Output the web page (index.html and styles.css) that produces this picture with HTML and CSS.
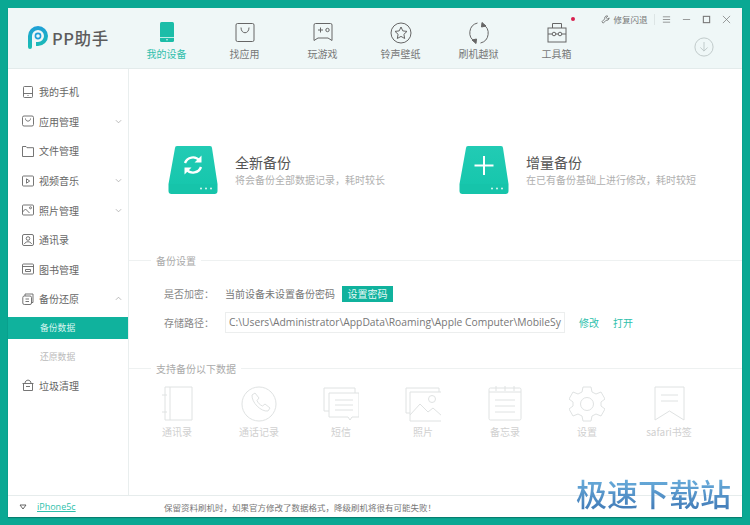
FILE: index.html
```html
<!DOCTYPE html>
<html lang="zh-CN">
<head>
<meta charset="utf-8">
<title>PP助手</title>
<link rel="stylesheet" href="styles.css">
</head>
<body>
<div class="window">
  <header class="header">
    <div class="brand">
      <svg class="logo" viewBox="0 0 22 24"><defs><linearGradient id="lg" x1="0" y1="0" x2="0" y2="1"><stop offset="0" stop-color="#1f9fd8"/><stop offset="1" stop-color="#19c0b0"/></linearGradient></defs><path d="M1 10a10 10 0 1 1 10 10h-2v-4h2a6 6 0 1 0-6-6v11a2 2 0 0 1-4 0z" fill="url(#lg)"/><circle cx="11" cy="10" r="2.6" fill="none" stroke="#1f9fd8" stroke-width="1.6"/></svg>
      <span class="brand-name">PP助手</span>
    </div>
    <nav class="nav">
      <a class="nav-item active"><svg class="nav-icon" viewBox="0 0 22 22"><rect x="4" y="0" width="14" height="20" rx="1.5" fill="#1bbda8"/><path d="M4 15.5h14" stroke="#e8f7f5" stroke-width=".8"/><circle cx="11" cy="17.7" r=".8" fill="#e8f7f5"/></svg>我的设备</a>
      <a class="nav-item"><svg class="nav-icon" viewBox="0 0 22 22"><rect x="2" y="1.5" width="18" height="18" rx="1.5"/><path d="M7 5.500c0 7 8 7 8 0" stroke="#666"/></svg>找应用</a>
      <a class="nav-item"><svg class="nav-icon" viewBox="0 0 22 22"><path d="M2 3a1.500 1.500 0 0 1 1.500-1.500h15A1.500 1.500 0 0 1 20 3v15.500l-4-2.500H6l-4 2.500z"/><path d="M6 8h5M8.500 5.500v5"/><circle cx="15.500" cy="8" r="1.700"/></svg>玩游戏</a>
      <a class="nav-item"><svg class="nav-icon" viewBox="0 0 22 22"><circle cx="11" cy="11" r="10"/><path d="M11 5l1.800 3.900 4.200.5-3.100 2.900.8 4.200L11 14.400l-3.700 2.100.8-4.200L5 9.400l4.200-.5z"/></svg>铃声壁纸</a>
      <a class="nav-item"><svg class="nav-icon" viewBox="0 0 22 22"><path d="M7 19.500A10 10 0 0 1 9.500 1M15 2.500A10 10 0 0 1 12.500 21"/><path d="M14 .5l4 3.500-4.500 1z" fill="#666"/><path d="M8 21.500L4 18l4.500-1z" fill="#666"/></svg>刷机越狱</a>
      <a class="nav-item"><svg class="nav-icon" viewBox="0 0 22 22"><path d="M6.500 6V1.500h9V6"/><rect x="2" y="6" width="18" height="14"/><path d="M2 12h4M16 12h4M10 12h2"/><circle cx="8" cy="12" r="1.800"/><circle cx="14" cy="12" r="1.800"/></svg>工具箱<span class="dot"></span></a>
    </nav>
    <div class="header-right">
      <div class="toolbar">
        <svg class="tool-wrench" viewBox="0 0 10 10"><path d="M6.500 1a2.500 2.500 0 0 0-2.300 3.300L1 7.500 2.500 9l3.200-3.200A2.500 2.500 0 0 0 9 3.200L7.500 4.500 5.800 3 7.500 1.200z"/></svg>
        <span class="repair">修复闪退</span>
        <span class="tool-sep"></span>
        <svg class="win-btn" viewBox="0 0 10 10"><path d="M1 2h8M1 5h8M1 8h8"/></svg>
        <svg class="win-btn" viewBox="0 0 10 10"><path d="M1 5h8"/></svg>
        <svg class="win-btn" viewBox="0 0 10 10"><rect x="1.500" y="1.500" width="7" height="7" stroke-width="1.200"/></svg>
        <svg class="win-btn" viewBox="0 0 10 10"><path d="M1 1l8 8M9 1l-8 8"/></svg>
      </div>
      <svg class="download" viewBox="0 0 22 22"><circle cx="11" cy="11" r="10"/><path d="M11 5.500v10M7 11.500l4 4 4-4"/></svg>
    </div>
  </header>

  <div class="body">
    <aside class="sidebar">
      <a class="side-item"><svg class="side-icon" viewBox="0 0 12 12"><rect x="1.500" y=".5" width="9" height="11" rx="1"/><path d="M1.500 7.500h9"/><path d="M5.500 9.500h1"/></svg>我的手机</a>
      <a class="side-item"><svg class="side-icon" viewBox="0 0 12 12"><rect x=".5" y="1" width="11" height="10" rx="1.500"/><path d="M3.500 3.500c0 3.500 5 3.500 5 0"/></svg>应用管理<svg class="chev" viewBox="0 0 8 5"><path d="M1 1l3 3 3-3"/></svg></a>
      <a class="side-item"><svg class="side-icon" viewBox="0 0 12 12"><path d="M.5 1.500h3.500l1 1.200h6.500v8.800H.5z"/></svg>文件管理</a>
      <a class="side-item"><svg class="side-icon" viewBox="0 0 12 12"><rect x=".5" y="1" width="11" height="10" rx="1"/><path d="M4.500 3.800l3.200 2.200-3.200 2.200z"/></svg>视频音乐<svg class="chev" viewBox="0 0 8 5"><path d="M1 1l3 3 3-3"/></svg></a>
      <a class="side-item"><svg class="side-icon" viewBox="0 0 12 12"><rect x=".5" y="1" width="11" height="10" rx="1"/><path d="M.5 8l3-3 4 4"/><circle cx="8.500" cy="3.800" r="1"/></svg>照片管理<svg class="chev" viewBox="0 0 8 5"><path d="M1 1l3 3 3-3"/></svg></a>
      <a class="side-item"><svg class="side-icon" viewBox="0 0 12 12"><rect x=".5" y=".5" width="11" height="11" rx="1.500"/><circle cx="6" cy="4.500" r="1.800"/><path d="M2.500 10c.5-3 6.500-3 7 0"/></svg>通讯录</a>
      <a class="side-item"><svg class="side-icon" viewBox="0 0 12 12"><rect x=".5" y="1" width="11" height="10" rx="1"/><path d="M.5 3.500h11M3.500 6.500h5v2h-5z"/></svg>图书管理</a>
      <a class="side-item"><svg class="side-icon" viewBox="0 0 12 12"><path d="M3 3V1h8v8.500h-1.500"/><rect x=".8" y="3" width="8.700" height="8.500" rx="1.500"/><path d="M3.500 6h3.500M3.500 8.500h3.500"/></svg>备份还原<svg class="chev" viewBox="0 0 8 5"><path d="M1 4l3-3 3 3"/></svg></a>
      <a class="side-sub current">备份数据</a>
      <a class="side-sub">还原数据</a>
      <a class="side-item"><svg class="side-icon" viewBox="0 0 12 12"><path d="M.5 4.500h11M1.500 4.500v7h9v-7M3 4.500C3 0 9 0 9 4.500M4 7.500h4"/></svg>垃圾清理</a>
    </aside>

    <main class="main">
      <section class="backup-cards">
        <div class="card">
          <svg class="card-icon" viewBox="0 0 50 48"><defs><linearGradient id="dg" x1="0" y1="0" x2="0" y2="1"><stop offset="0" stop-color="#22cbb4"/><stop offset="1" stop-color="#17c7ad"/></linearGradient></defs><path d="M7 2a2 2 0 0 1 2-2h33a2 2 0 0 1 2 2l5.500 36H.5z" fill="url(#dg)"/><path d="M.5 38h49v7a3 3 0 0 1-3 3h-43a3 3 0 0 1-3-3z" fill="#16c4aa"/><g fill="#d8f7f1"><circle cx="33" cy="42.500" r="1"/><circle cx="38" cy="42.500" r="1"/><circle cx="43" cy="42.500" r="1"/></g><g fill="none" stroke="#fff" stroke-width="2.400"><path d="M17 17a8.500 8.500 0 0 1 14.500-2.500"/><path d="M33 21a8.500 8.500 0 0 1-14.500 2.500"/></g><path d="M33.500 9.500v7h-7zM16.500 28.500v-7h7z" fill="#fff"/></svg>
          <div class="card-text"><h2 class="card-title">全新备份</h2><p class="card-desc">将会备份全部数据记录，耗时较长</p></div>
        </div>
        <div class="card">
          <svg class="card-icon" viewBox="0 0 50 48"><path d="M7 2a2 2 0 0 1 2-2h33a2 2 0 0 1 2 2l5.500 36H.5z" fill="url(#dg)"/><path d="M.5 38h49v7a3 3 0 0 1-3 3h-43a3 3 0 0 1-3-3z" fill="#16c4aa"/><g fill="#d8f7f1"><circle cx="33" cy="42.500" r="1"/><circle cx="38" cy="42.500" r="1"/><circle cx="43" cy="42.500" r="1"/></g><path d="M25 10v19M15.500 19.500h19" stroke="#fff" stroke-width="2" fill="none"/></svg>
          <div class="card-text"><h2 class="card-title">增量备份</h2><p class="card-desc">在已有备份基础上进行修改，耗时较短</p></div>
        </div>
      </section>

      <section class="settings">
        <h3 class="section-title">备份设置</h3>
        <div class="form-row first">
          <span class="form-label">是否加密：</span>
          <span class="form-value">当前设备未设置备份密码</span>
          <button class="btn">设置密码</button>
        </div>
        <div class="form-row">
          <span class="form-label">存储路径：</span>
          <div class="path-input">C:\Users\Administrator\AppData\Roaming\Apple Computer\MobileSy</div>
          <a class="link edit">修改</a>
          <a class="link">打开</a>
        </div>
      </section>

      <section class="supported">
        <h3 class="section-title">支持备份以下数据</h3>
        <div class="data-grid">
          <div class="data-item"><svg class="data-icon" viewBox="0 0 36 36"><path d="M6 1h27v33H6zM11 1v33M3 9h5M3 26h5"/></svg>通讯录</div>
          <div class="data-item"><svg class="data-icon" viewBox="0 0 36 36"><circle cx="18" cy="18" r="17"/><path d="M11 9l3-2 4 5-2 2.500c1 2.500 3 4.500 5.500 5.500l2.500-2 5 4-2 3c-7 1-16.500-8.500-16-16z"/></svg>通话记录</div>
          <div class="data-item"><svg class="data-icon" viewBox="0 0 36 36"><path d="M6 25H1V2h31v5"/><path d="M6 7h30v24h-7l-2 3-2-3H6z"/><path d="M12 14h18M12 19h18M12 24h18"/></svg>短信</div>
          <div class="data-item"><svg class="data-icon" viewBox="0 0 36 36"><path d="M5 27H1V2h33v4"/><path d="M5 6h32v29H5z"/><path d="M5 29l10-11 8 8 5-4 9 8"/><circle cx="27" cy="13" r="3.500"/></svg>照片</div>
          <div class="data-item"><svg class="data-icon" viewBox="0 0 36 36"><rect x="2" y="2" width="32" height="32" rx="1.500"/><path d="M2 6h32M9 0v5M18 0v5M27 0v5M8 14h20M8 20h20M8 26h20"/></svg>备忘录</div>
          <div class="data-item"><svg class="data-icon" viewBox="0 0 36 36"><path d="M14 1h8l1 5 4 2 5-2 4 7-4 3v4l4 3-4 7-5-2-4 2-1 5h-8l-1-5-4-2-5 2-4-7 4-3v-4l-4-3 4-7 5 2 4-2z"/><circle cx="18" cy="18" r="6.500"/></svg>设置</div>
          <div class="data-item"><svg class="data-icon" viewBox="0 0 36 36"><path d="M4 1h29v33L18.500 25 4 34zM10 9h17M10 15h17"/></svg>safari书签</div>
        </div>
      </section>
    </main>
  </div>

  <footer class="footer">
    <svg class="device-arrow" viewBox="0 0 8 6"><path d="M1 1h6L4 5z"/></svg>
    <a class="device-name">iPhone5c</a>
    <span class="notice">保留资料刷机时，如果官方修改了数据格式，降级刷机将很有可能失败！</span>
  </footer>
  <div class="watermark">极速下载站</div>
</div>
</body>
</html>
```

FILE: styles.css
```css
* { box-sizing: border-box; }
html, body { margin: 0; padding: 0; height: 100%; }
body {
  width: 750px;
  height: 525px;
  overflow: hidden;
  background: #0aa893;
  font-family: "Noto Sans CJK SC", "Liberation Sans", sans-serif;
  font-size: 10px;
  color: #555;
}
.window {
  position: relative;
  margin: 8px;
  width: 734px;
  height: 509px;
  background: #fff;
  display: flex;
  flex-direction: column;
  box-shadow: 0 1px 1px #067f70;
}
svg { fill: none; flex: none; display: block; }

/* header */
.header {
  height: 61px;
  flex: none;
  display: flex;
  background: #eff7f7;
  border-bottom: 1px solid #e3ebeb;
}
.brand { width: 119.500px; display: flex; align-items: center; padding: 0 0 0 19px; gap: 3px; }
.logo { width: 22px; height: 24px; }
.brand-name { font-size: 16.500px; color: #5c5c5c; font-weight: 500; letter-spacing: .6px; white-space: nowrap; }
.nav { display: flex; }
.nav-item {
  position: relative;
  width: 78px;
  display: flex;
  flex-direction: column;
  align-items: center;
  padding-top: 14px;
  gap: 2px;
  color: #777;
  font-size: 10px;
  line-height: 15px;
}
.nav-item.active { color: #2fbfac; }
.nav-icon { width: 22px; height: 22px; stroke: #666; stroke-width: 1; }
.active .nav-icon { stroke: none; }
.dot {
  position: absolute;
  top: 9px;
  left: 53px;
  width: 4px;
  height: 4px;
  border-radius: 50%;
  background: #d9204f;
}
.header-right { flex: 1; display: flex; flex-direction: column; }
.toolbar { height: 20px; padding: 2px 0 0 5px; display: flex; align-items: center; }
.tool-wrench { width: 9px; height: 9px; stroke: #666; stroke-width: .9; }
.repair { margin-left: 4px; font-size: 8.500px; color: #777; white-space: nowrap; }
.tool-sep { width: 1px; height: 11px; background: #dde5e5; margin: 0 7px 0 6px; }
.win-btn { width: 9px; height: 9px; stroke: #777; stroke-width: .8; margin-right: 11px; }
.download { width: 20px; height: 20px; stroke: #bcc6c6; stroke-width: 1; margin: 9px 0 0 98px; }

/* layout */
.body { flex: 1; display: flex; min-height: 0; }

/* sidebar */
.sidebar {
  width: 121px;
  flex: none;
  padding-top: 8px;
  border-right: 1px solid #e9eeee;
  display: flex;
  flex-direction: column;
}
.side-item {
  height: 29.600px;
  display: flex;
  align-items: center;
  padding-left: 14px;
  font-size: 10px;
  color: #666;
}
.side-icon { width: 12px; height: 12px; margin-right: 5px; stroke: #666; stroke-width: .9; }
.chev { width: 7px; height: 5px; margin-left: auto; margin-right: 6px; stroke: #aaa; stroke-width: .9; }
.side-sub {
  height: 28.800px;
  display: flex;
  align-items: center;
  padding-left: 32px;
  font-size: 8.800px;
  color: #bbb;
}
.side-sub.current { height: 22px; margin-bottom: 3px; margin-top: 3px; background: #10b29d; color: #d8f5f0; }

/* main */
.main { flex: 1; min-width: 0; display: flex; flex-direction: column; }
.backup-cards { display: flex; padding: 77px 0 0 39px; height: 184px; }
.card { width: 291px; flex: none; display: flex; align-items: flex-start; gap: 17px; }
.card-icon { width: 50px; height: 48px; }
.card-title { margin: 7px 0 0; font-size: 14px; line-height: 19px; font-weight: 400; color: #555; }
.card-desc { margin: 1px 0 0; font-size: 10px; line-height: 14px; color: #b0b0b0; white-space: nowrap; }

.section-title {
  margin: 0;
  display: flex;
  align-items: center;
  gap: 5px;
  height: 14px;
  font-size: 10px;
  font-weight: 400;
  color: #aaa;
}
.section-title::before { content: ""; width: 22px; height: 1px; background: #eef1f1; }
.section-title::after { content: ""; flex: 1; height: 1px; background: #eef1f1; }

.settings { height: 108px; }
.form-row { display: flex; align-items: center; height: 21px; margin-top: 10px; padding-left: 35px; }
.form-row.first { margin-top: 18px; height: 17px; }
.form-label { width: 61px; flex: none; font-size: 10px; color: #888; white-space: nowrap; }
.form-value { font-size: 10px; color: #777; white-space: nowrap; }
.btn {
  margin-left: 7px;
  width: 51px;
  height: 16px;
  padding: 0;
  border: 0;
  background: #10b29d;
  color: #e6f8f5;
  font: inherit;
  font-size: 10px;
  line-height: 16px;
}
.path-input {
  width: 340px;
  height: 21px;
  padding: 0 0 0 3px;
  border: 1px solid #eceeee;
  overflow: hidden;
  white-space: nowrap;
  font-size: 10.300px;
  line-height: 19px;
  color: #777;
  font-family: "Open Sans", "Noto Sans CJK SC", sans-serif;
}
.link { font-size: 10px; color: #2fbfac; margin-left: 14px; }

.supported { flex: 1; }
.data-grid { display: flex; padding: 11px 0 0 7px; }
.data-item {
  width: 82px;
  display: flex;
  flex-direction: column;
  align-items: center;
  gap: 2px;
  font-size: 10px;
  line-height: 15px;
  color: #d0d0d0;
  white-space: nowrap;
}
.data-icon { width: 36px; height: 36px; stroke: #dfe2e2; stroke-width: 1; }

/* footer */
.footer {
  height: 22px;
  flex: none;
  display: flex;
  align-items: center;
  border-top: 1px solid #e6ecec;
  padding-left: 11px;
}
.device-arrow { width: 8px; height: 6px; stroke: #555; stroke-width: .9; }
.device-name { margin-left: 10px; width: 127px; font-size: 9px; color: #2fbfac; text-decoration: underline; font-family: "Open Sans", sans-serif; }
.notice { font-size: 8.500px; color: #777; white-space: nowrap; }

.watermark {
  position: absolute;
  left: 568px;
  bottom: 5px;
  font-size: 31px;
  line-height: 38px;
  font-weight: 500;
  white-space: nowrap;
  background: linear-gradient(#6fb4e0, #3f78b5);
  -webkit-background-clip: text;
  background-clip: text;
  color: transparent;
}
```
